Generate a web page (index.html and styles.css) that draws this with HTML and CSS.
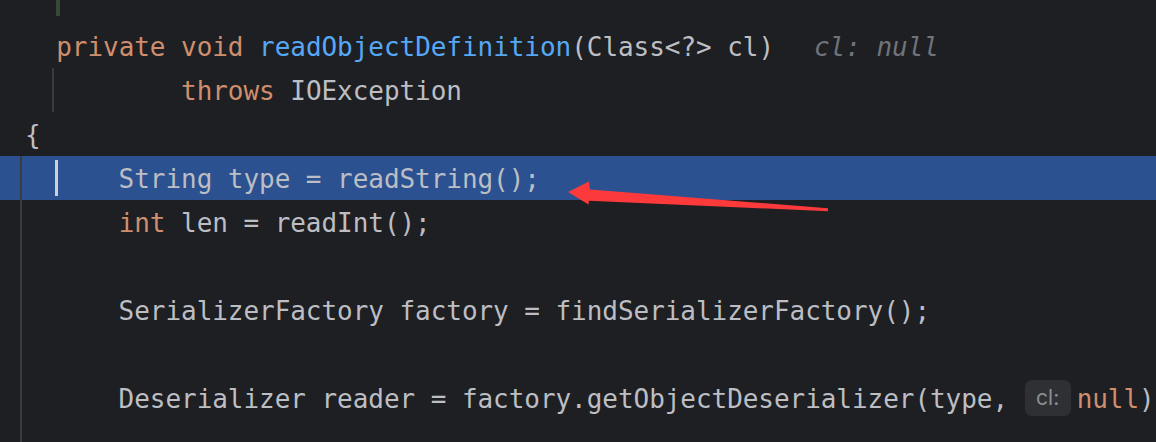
FILE: index.html
```html
<!DOCTYPE html>
<html lang="en">
<head>
<meta charset="utf-8">
<title>Editor</title>
<link rel="stylesheet" href="styles.css">
</head>
<body>
<div class="editor">
  <div class="line line-partial"></div>
  <div class="line"><span class="indent2"></span><span class="kw">private</span> <span class="kw">void</span> <span class="fn">readObjectDefinition</span>(Class&lt;?&gt; cl)<span class="hint">cl: null</span></div>
  <div class="line"><span class="indent2"></span>        <span class="kw">throws</span> IOException</div>
  <div class="line">{</div>
  <div class="line current">      String type = readString();</div>
  <div class="line">      <span class="kw">int</span> len = readInt();</div>
  <div class="line"></div>
  <div class="line">      SerializerFactory factory = findSerializerFactory();</div>
  <div class="line"></div>
  <div class="line">      Deserializer reader = factory.getObjectDeserializer(type, <span class="inlay">cl:</span><span class="kw">null</span>)</div>
  <div class="line"></div>

  <div class="vcs-mark"></div>
  <div class="guide guide-throws"></div>
  <div class="guide guide-body"></div>
  <div class="caret"></div>

  <svg class="arrow" width="1156" height="442" viewBox="0 0 1156 442">
    <polygon fill="#fd3a3b" points="568,192 589,181.5 590,189.5 828,208.3 828,211.2 589,200.8 588.5,204.5"/>
  </svg>
</div>
</body>
</html>
```

FILE: styles.css
```css
html, body {
  margin: 0;
  padding: 0;
  background: #1e1f22;
  overflow: hidden;
}

.editor {
  position: relative;
  width: 1156px;
  height: 442px;
  overflow: hidden;
  background: #1e1f22;
  font-family: "DejaVu Sans Mono", "Liberation Mono", monospace;
  font-size: 26px;
  letter-spacing: -0.05px;
  color: #bcbec4;
}

.line {
  box-sizing: border-box;
  height: 44px;
  line-height: 44px;
  padding-top: 1px;
  padding-left: 25px;
  white-space: pre;
}

.line-partial {
  height: 24px;
}

.indent2::before {
  content: "  ";
}

.current {
  background: #2b5191;
}

.kw {
  color: #cf8e6d;
}

.fn {
  color: #56a8f5;
}

.hint {
  margin-left: 40px;
  font-style: italic;
  color: #6f737a;
}

.inlay {
  display: inline-block;
  width: 46px;
  height: 36px;
  line-height: 36px;
  margin-left: 1px;
  margin-right: 6px;
  vertical-align: middle;
  position: relative;
  top: -3px;
  border-radius: 7px;
  background: #2e3034;
  color: #8b8e94;
  font-family: "Inter", "Noto Sans", sans-serif;
  font-size: 21px;
  letter-spacing: 0;
  text-align: center;
}

.vcs-mark {
  position: absolute;
  left: 56px;
  top: 0;
  width: 4px;
  height: 16px;
  background: #374a3a;
}

.guide {
  position: absolute;
  width: 2px;
  background: #393b40;
}

.guide-throws {
  left: 52px;
  top: 68px;
  height: 44px;
}

.guide-body {
  left: 20px;
  top: 156px;
  height: 286px;
}

.caret {
  position: absolute;
  left: 55px;
  top: 160px;
  width: 3px;
  height: 36px;
  background: #ced0d6;
}

.arrow {
  position: absolute;
  left: 0;
  top: 0;
}
```
